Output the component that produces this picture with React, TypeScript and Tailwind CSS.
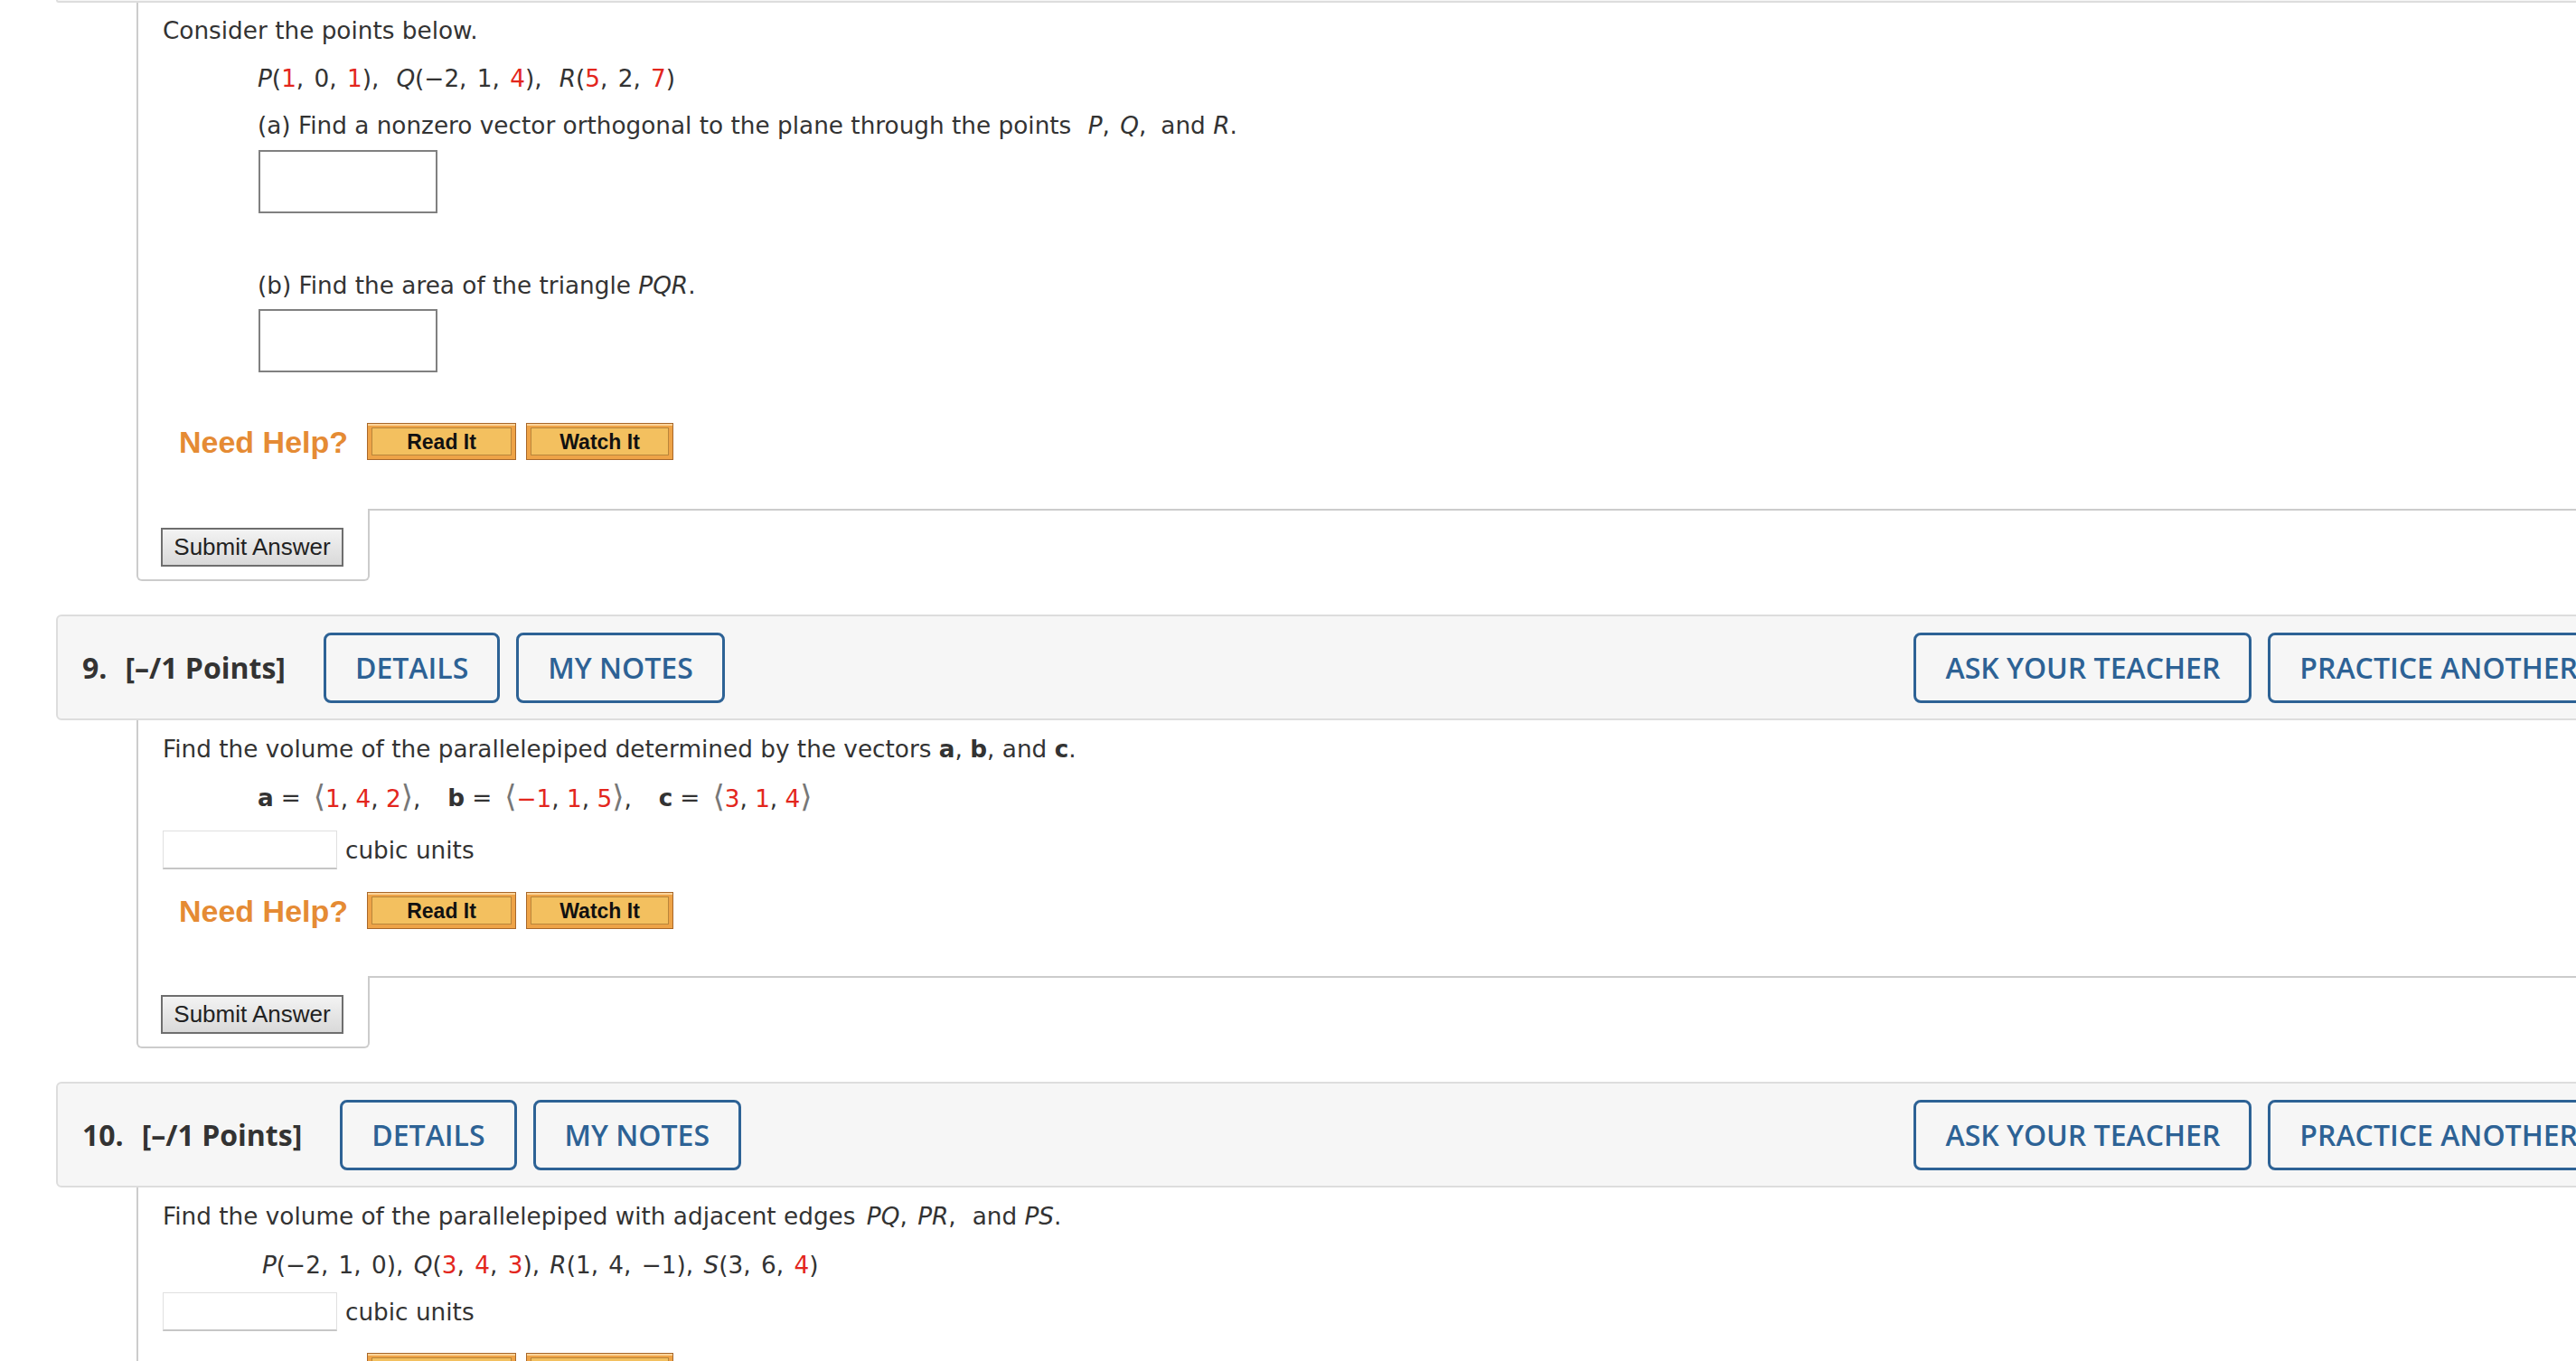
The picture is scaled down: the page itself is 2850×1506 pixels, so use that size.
import type { ReactNode } from "react";

function Red({ children }: { children: ReactNode }) {
  return <span className="text-[#e3261d]">{children}</span>;
}

function It({ children }: { children: ReactNode }) {
  return <i className="italic">{children}</i>;
}

function Br({ children }: { children: ReactNode }) {
  return <span className="text-[34px] leading-none text-[#777]">{children}</span>;
}

function HeaderButton({ children }: { children: ReactNode }) {
  return (
    <button className="flex h-[78px] items-center rounded-[8px] border-[3px] border-[#2d6295] px-[32px] text-[32px] font-semibold text-[#2d6295]">
      {children}
    </button>
  );
}

function Header({ num }: { num: string }) {
  return (
    <div className="flex h-[117px] w-[2850px] items-center rounded-[6px] border-2 border-[#dddddd] bg-[#f6f6f6] pl-[27px] pr-[23px] font-['Open_Sans',sans-serif]">
      <span className="text-[32px] font-bold text-[#333]">{num}</span>
      <span className="ml-[20px] text-[32px] font-bold text-[#333]">[–/1 Points]</span>
      <div className="ml-[42px] flex gap-[18px]">
        <HeaderButton>DETAILS</HeaderButton>
        <HeaderButton>MY NOTES</HeaderButton>
      </div>
      <div className="ml-auto flex gap-[18px]">
        <HeaderButton>ASK YOUR TEACHER</HeaderButton>
        <HeaderButton>PRACTICE ANOTHER</HeaderButton>
      </div>
    </div>
  );
}

function HelpButton({ label, width }: { label: string; width: string }) {
  return (
    <div className={`h-[41px] ${width} border border-[#a8672a] bg-[#eea347] p-[4px] shadow-[inset_0_2px_0_#fbd49a]`}>
      <div className="flex h-full items-center justify-center border border-[#b9853a] bg-[#f3c05f] text-[23px] font-bold text-[#111]">
        {label}
      </div>
    </div>
  );
}

function NeedHelp() {
  return (
    <div className="ml-[18px] flex items-center font-['Liberation_Sans',Arial,sans-serif]">
      <span className="text-[34px] font-bold leading-none text-[#e58b34]">Need Help?</span>
      <div className="ml-[21px]">
        <HelpButton label="Read It" width="w-[165px]" />
      </div>
      <div className="ml-[11px]">
        <HelpButton label="Watch It" width="w-[163px]" />
      </div>
    </div>
  );
}

function SubmitTab() {
  return (
    <div className="ml-[89px] flex">
      <div className="w-[258px] rounded-b-[6px] border-2 border-t-0 border-[#cccccc] pb-[14px] pl-[25px] pt-[21px]">
        <button className="h-[43px] w-[202px] border-2 border-[#6e6e6e] bg-linear-to-b from-[#f3f3f3] to-[#d9d9d9] font-['Liberation_Sans',Arial,sans-serif] text-[26px] text-[#222]">
          Submit Answer
        </button>
      </div>
      <div className="flex-1 border-t-2 border-[#cccccc]" />
    </div>
  );
}

function Body({ children, className }: { children: ReactNode; className: string }) {
  return (
    <div className={`ml-[89px] border-l-2 border-[#cccccc] pl-[27px] font-['DejaVu_Sans',Verdana,sans-serif] text-[26.3px] leading-[36px] text-[#333] ${className}`}>
      {children}
    </div>
  );
}

function CubicInput() {
  return (
    <div className="flex items-center">
      <div className="h-[43px] w-[193px] border border-b-2 border-[#e0e0e0] border-b-[#c6c6c6] bg-white" />
      <span className="ml-[9px]">cubic units</span>
    </div>
  );
}

export default function App() {
  return (
    <div className="min-h-screen w-[2850px] overflow-hidden bg-white">
      <div className="w-[3000px] pl-[62px]">
        <div className="h-[3px] w-[2850px] rounded-bl-[6px] border-b-2 border-l-2 border-[#dddddd] bg-[#f6f6f6]" />

        <Body className="pb-[54px] pt-[13px]">
          <p>Consider the points below.</p>
          <p className="ml-[105px] mt-[17px] [word-spacing:3px]">
            <It>P</It>(<Red>1</Red>, 0, <Red>1</Red>),
            <span className="ml-[19px]">
              <It>Q</It>(−2, 1, <Red>4</Red>),
            </span>
            <span className="ml-[19px]">
              <It>R</It>(<Red>5</Red>, 2, <Red>7</Red>)
            </span>
          </p>
          <p className="ml-[105px] mt-[16px]">
            (a) Find a nonzero vector orthogonal to the plane through the points{" "}
            <span className="ml-[10px] [word-spacing:3px]">
              <It>P</It>, <It>Q</It>,
            </span>
            <span className="ml-[16px]">
              and <It>R</It>.
            </span>
          </p>
          <div className="ml-[106px] mt-[9px] h-[70px] w-[198px] border-2 border-[#808080] bg-white" />
          <p className="ml-[105px] mt-[62px]">
            (b) Find the area of the triangle <It>PQR</It>.
          </p>
          <div className="ml-[106px] mt-[8px] h-[70px] w-[198px] border-2 border-[#808080] bg-white" />
          <div className="mt-[56px]">
            <NeedHelp />
          </div>
        </Body>
        <SubmitTab />

        <div className="mt-[37px]">
          <Header num="9." />
        </div>
        <Body className="pb-[52px] pt-[14px]">
          <p>
            Find the volume of the parallelepiped determined by the vectors <b>a</b>, <b>b</b>, and <b>c</b>.
          </p>
          <p className="ml-[105px] mt-[17px] flex items-center">
            <b>a</b>
            <span className="ml-[8px]">=</span>
            <span className="ml-[14px]">
              <Br>⟨</Br>
              <Red>1</Red>, <Red>4</Red>, <Red>2</Red>
              <Br>⟩</Br>,
            </span>
            <b className="ml-[30px]">b</b>
            <span className="ml-[8px]">=</span>
            <span className="ml-[14px]">
              <Br>⟨</Br>
              <Red>−1</Red>, <Red>1</Red>, <Red>5</Red>
              <Br>⟩</Br>,
            </span>
            <b className="ml-[30px]">c</b>
            <span className="ml-[8px]">=</span>
            <span className="ml-[14px]">
              <Br>⟨</Br>
              <Red>3</Red>, <Red>1</Red>, <Red>4</Red>
              <Br>⟩</Br>
            </span>
          </p>
          <div className="mt-[17px]">
            <CubicInput />
          </div>
          <div className="mt-[25px]">
            <NeedHelp />
          </div>
        </Body>
        <SubmitTab />

        <div className="mt-[37px]">
          <Header num="10." />
        </div>
        <Body className="pb-[60px] pt-[14px]">
          <p>
            Find the volume of the parallelepiped with adjacent edges{" "}
            <span className="ml-[4px] [word-spacing:3px]">
              <It>PQ</It>, <It>PR</It>,
            </span>
            <span className="ml-[18px]">
              and <It>PS</It>.
            </span>
          </p>
          <p className="ml-[110px] mt-[18px] [word-spacing:3px]">
            <It>P</It>(−2, 1, 0), <It>Q</It>(<Red>3</Red>, <Red>4</Red>, <Red>3</Red>), <It>R</It>(1, 4, −1),{" "}
            <It>S</It>(3, 6, <Red>4</Red>)
          </p>
          <div className="mt-[12px]">
            <CubicInput />
          </div>
          <div className="mt-[24px]">
            <NeedHelp />
          </div>
        </Body>
      </div>
    </div>
  );
}
